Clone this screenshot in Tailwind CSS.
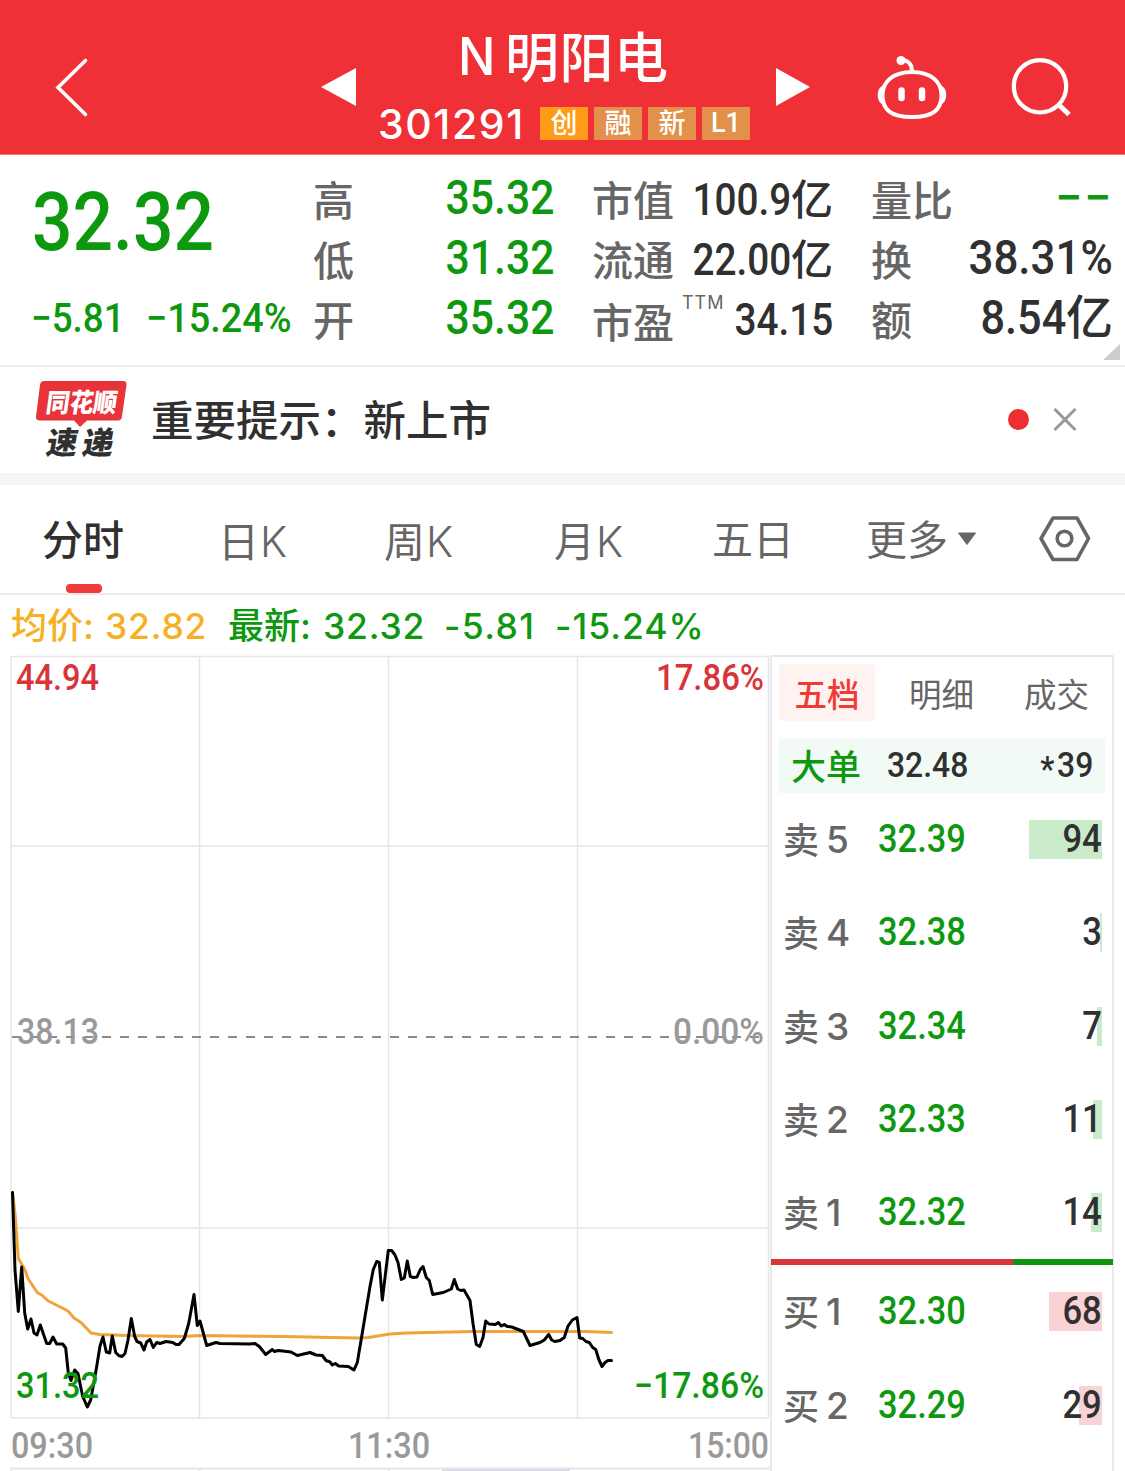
<!DOCTYPE html>
<html lang="zh-CN">
<head>
    <meta charset="UTF-8">
    <meta name="viewport" content="width=device-width, initial-scale=1.0">
    <title>N明阳电 301291</title>
    <!-- Tailwind CSS -->
    <script src="https://cdn.jsdelivr.net/npm/@tailwindcss/browser@4"></script>
</head>
<body class="bg-white w-[1125px] h-[1471px] overflow-hidden font-['Roboto','Noto_Sans_CJK_SC',sans-serif] font-medium text-[#303030] whitespace-nowrap">
    <!-- Header -->
    <header class="h-[155px] bg-[#f03037] text-white flex border-b border-[#f4777b]">
        <svg class="w-[320px] h-[154px] shrink-0" viewBox="0 0 320 154" fill="none" stroke="currentColor" stroke-width="3.6" stroke-linecap="round">
            <path d="M85.5 60.5L58 87.5L85.5 114.5"/>
        </svg>
        <svg class="w-[40px] h-[154px] shrink-0" viewBox="320 0 40 154" fill="currentColor">
            <path d="M321 87L356 68V106Z"/>
        </svg>
        <div class="w-[410px] flex flex-col shrink-0">
            <h1 class="h-[80px] pl-[96px] flex leading-[80px] text-[54px]">
                <span class="w-[49px] pl-[2px] pt-[17px] font-['Inter'] font-[550] text-[52px] origin-left scale-x-[0.95]">N</span>
                <span class="pt-[20px] tracking-[0.5px]">明阳电</span>
            </h1>
            <div class="flex items-center h-[33px] mt-[27px] ml-[18px]">
                <span class="w-[162px] font-['Inter'] font-[550] text-[41px] leading-[32px] tracking-[1.6px]">301291</span>
                <div class="flex gap-[6px] text-[27px] leading-[35px] text-center">
                    <span class="w-[48px] h-[33px] bg-[#ff9b17]">创</span>
                    <span class="w-[48px] h-[33px] bg-[#e2904a]">融</span>
                    <span class="w-[48px] h-[33px] bg-[#e2904a]">新</span>
                    <span class="w-[48px] h-[33px] bg-[#e2904a] leading-[32px]">L1</span>
                </div>
            </div>
        </div>
        <svg class="w-[40px] h-[154px] shrink-0" viewBox="770 0 40 154" fill="currentColor">
            <path d="M776 68L810 87L776 106Z"/>
        </svg>
        <!-- Assistant -->
        <svg class="w-[160px] h-[154px] shrink-0" viewBox="810 0 160 154" fill="none" stroke="currentColor" stroke-width="4">
            <path d="M912 72C930 72 941.500 81 941.500 95C941.500 110 933 117 912 117C891 117 882.500 110 882.500 95C882.500 81 894 72 912 72Z"/>
            <path d="M901 60C908 60 912 64 912 71"/>
            <circle cx="901" cy="60.5" r="4.5" fill="currentColor" stroke="none"/>
            <path d="M901.5 90.5V98M922 90.5V98" stroke-width="6.5" stroke-linecap="round"/>
            <path d="M883 86C876 87 876 103 883 104ZM941 86C948 87 948 103 941 104Z" fill="currentColor" stroke="none"/>
        </svg>
        <svg class="w-[155px] h-[154px] shrink-0" viewBox="970 0 155 154" fill="none" stroke="currentColor" stroke-width="4.2">
            <circle cx="1040" cy="86.3" r="26.2"/>
            <path d="M1059 105L1069 114.5" stroke-width="5"/>
        </svg>
    </header>

    <!-- Quote -->
    <section class="h-[212px] pt-[12px] border-b-2 border-[#ececec] flex relative">
        <div class="w-[313px] pl-[33px] text-[#0d980f] shrink-0">
            <div class="h-[110px] leading-[110px] text-[82px] origin-left scale-x-[0.87] -ml-[1px]">32.32</div>
            <div class="flex h-[82px] leading-[84px] text-[40px] -ml-[2px]">
                <span class="w-[115px] origin-left scale-x-[0.92]">−5.81</span>
                <span class="origin-left scale-x-[0.945]">−15.24%</span>
            </div>
        </div>
        <div class="w-[241px] shrink-0 leading-[60px]">
            <div class="h-[60px] flex justify-between"><span class="pt-[5px] text-[41px] text-[#666]">高</span><span class="pt-[1px] text-[48px] text-[#0d980f] origin-right scale-x-[0.89]">35.32</span></div>
            <div class="h-[60px] flex justify-between"><span class="pt-[5px] text-[41px] text-[#666]">低</span><span class="pt-[1px] text-[48px] text-[#0d980f] origin-right scale-x-[0.89]">31.32</span></div>
            <div class="h-[60px] flex justify-between"><span class="pt-[5px] text-[41px] text-[#666]">开</span><span class="pt-[1px] text-[48px] text-[#0d980f] origin-right scale-x-[0.89]">35.32</span></div>
        </div>
        <div class="w-[241px] ml-[38px] shrink-0 leading-[60px]">
            <div class="h-[60px] flex justify-between"><span class="pt-[5px] text-[41px] text-[#666]">市值</span><span class="flex text-[44px] pt-[3px]"><span class="origin-right scale-x-[0.88]">100.9</span><span class="text-[42px] pt-[1px]">亿</span></span></div>
            <div class="h-[60px] flex justify-between"><span class="pt-[5px] text-[41px] text-[#666]">流通</span><span class="flex text-[44px] pt-[3px]"><span class="origin-right scale-x-[0.88]">22.00</span><span class="text-[42px] pt-[1px]">亿</span></span></div>
            <div class="h-[60px] flex">
                <span class="pt-[7px] text-[41px] text-[#666]">市盈</span>
                <span class="w-[30px] ml-[8px] font-['Inter'] font-normal text-[18px] leading-[31px] tracking-[1px] text-[#666]">TTM</span>
                <span class="ml-auto pt-[3px] text-[44px] origin-right scale-x-[0.88]">34.15</span>
            </div>
        </div>
        <div class="w-[242px] ml-[38px] shrink-0 leading-[60px]">
            <div class="h-[60px] flex justify-between"><span class="pt-[5px] text-[41px] text-[#666]">量比</span><span class="pt-[1px] text-[48px] text-[#0d980f] tracking-[2px]">−−</span></div>
            <div class="h-[60px] flex justify-between"><span class="pt-[5px] text-[41px] text-[#666]">换</span><span class="pt-[1px] text-[48px] origin-right scale-x-[0.915]">38.31%</span></div>
            <div class="h-[60px] flex justify-between"><span class="pt-[5px] text-[41px] text-[#666]">额</span><span class="flex pt-[1px] text-[48px]"><span class="origin-right scale-x-[0.9]">8.54</span><span class="text-[47px]">亿</span></span></div>
        </div>
        <svg class="absolute right-[5px] bottom-[5px] w-[17px] h-[16px]" viewBox="0 0 17 16"><path d="M17 0V16H0Z" fill="#ccc"/></svg>
    </section>

    <!-- News -->
    <section class="h-[106px] flex items-center pl-[34px] pr-[47px]">
        <svg class="w-[95px] h-[80px] shrink-0 overflow-visible" viewBox="34 379 95 80" font-family="Noto Sans CJK SC" font-weight="900">
            <path d="M44 380H123Q127 380 126.500 384L122 415.500Q121.500 419.500 118 419.500H87L80 426L74 419.500H40Q35.500 419.500 36 415.500L40 384Q40.500 380 44 380Z" fill="#e8333a"/>
            <text transform="translate(45 411) skewX(-8)" font-size="26" textLength="71" lengthAdjust="spacingAndGlyphs" fill="#fff">同花顺</text>
            <text transform="translate(45 452.500) skewX(-10)" font-size="31" textLength="67" fill="#303030">速递</text>
        </svg>
        <span class="ml-[22px] text-[42.5px] leading-[60px] pt-[4px]">重要提示：新上市</span>
        <svg class="ml-auto w-[72px] h-[24px]" viewBox="1006 407.5 72 24">
            <circle cx="1018.500" cy="419" r="10.500" fill="#ee2f32"/>
            <path d="M1054.500 408.500L1075.500 429.500M1075.500 408.500L1054.500 429.500" stroke="#999" stroke-width="3"/>
        </svg>
    </section>
    <div class="h-[12px] bg-[#f5f5f5]"></div>

    <!-- Period tabs -->
    <nav class="h-[110px] flex border-b-2 border-[#ebebed] text-[41px] leading-[113px] font-normal text-[#666] relative">
        <span class="w-[176px] pl-[42px] font-medium text-[#303030]">分时</span>
        <span class="w-[166px] pl-[42px]">日<span class="font-['Inter'] font-[350] text-[42px] ml-px">K</span></span>
        <span class="w-[170px] pl-[42px]">周<span class="font-['Inter'] font-[350] text-[42px] ml-px">K</span></span>
        <span class="w-[158px] pl-[42px]">月<span class="font-['Inter'] font-[350] text-[42px] ml-px">K</span></span>
        <span class="w-[154px] pl-[42px]">五日</span>
        <span class="w-[131px] pl-[42px]">更多</span>
        <svg class="w-[170px] h-[108px]" viewBox="955 485 170 108">
            <path d="M958.500 533H975.500L967 544.500Z" fill="#666" stroke="#666" stroke-linejoin="round"/>
            <path d="M1053 518H1077L1088.500 538.500L1077 559.500H1053L1041 538.500Z" fill="none" stroke="#666" stroke-width="3.600" stroke-linejoin="round"/>
            <circle cx="1064.500" cy="538.500" r="7.300" fill="none" stroke="#666" stroke-width="3.600"/>
        </svg>
        <div class="absolute left-[66px] bottom-0 w-[36px] h-[9px] rounded-[4px] bg-[#f23c3c]"></div>
    </nav>

    <!-- Average and latest price -->
    <div class="h-[60px] flex pl-[11px] font-['Inter','Noto_Sans_CJK_SC'] font-[550] text-[35.5px] leading-[63px] text-[#0d980f]">
        <span class="w-[94px] font-medium text-[36px] text-[#f7b024]">均价:</span>
        <span class="w-[123px] text-[#f7b024] tracking-[0.8px]">32.82</span>
        <span class="w-[95px] font-medium text-[36px]">最新:</span>
        <span class="w-[121px] tracking-[0.8px]">32.32</span>
        <span class="w-[111px] tracking-[1.4px]">-5.81</span>
        <span class="tracking-[1px]">-15.24%</span>
    </div>

    <main class="flex h-[816px]">
        <!-- Intraday chart -->
        <svg class="w-[770px] h-[816px] shrink-0 overflow-visible" viewBox="0 655 770 816" font-family="Roboto" font-size="36.500" font-weight="500">
            <g stroke="#e6e6e8" stroke-width="1.500" fill="none">
                <path d="M11 656.500H769M11 846H769M11 1228H769M11 1418H769"/>
                <path d="M11.200 656V1418M199.500 656V1418M388.500 656V1418M577.500 656V1418M768.500 656V1418"/>
                <path d="M11 1468.500H770M11.200 1468V1471M199.500 1468V1471M388.500 1468V1471" stroke-width="2"/>
            </g>
            <path d="M442 1470.300H570" stroke="#d9d8e8" stroke-width="2"/>
            <path d="M12 1037H768" stroke="#666" stroke-width="1.500" stroke-dasharray="9 9"/>
            <polyline fill="none" stroke="#eda53a" stroke-width="3" stroke-linejoin="round" stroke-linecap="round" points="12.5,1192.5 15.3,1216.5 18.3,1258.5 24.3,1268.5 28.3,1279 37.3,1292.5 42.3,1295.5 48.3,1301 62.3,1308 68,1311 74,1318 81,1322.5 91,1333 100,1334.5 126.7,1335.5 183.3,1336.5 200,1335.5 283.3,1336.5 356.7,1338 368.3,1337.5 390,1334 406.7,1333 473.3,1331.5 586.7,1331.5 611.5,1332.5"/>
            <polyline fill="none" stroke="#000" stroke-width="3" stroke-linejoin="round" stroke-linecap="round" points="12.5,1192.5 15,1270 18.3,1311.5 21.7,1267 24.7,1313 27.7,1329 31,1319 34,1333 37,1335 40.3,1325 46.7,1343.5 49.7,1343.5 53,1337 56.7,1344 62.7,1344 65.7,1348 68.3,1373 71,1380.5 74.7,1370 78,1373.5 82.7,1396.5 87.3,1407 90.7,1400 96.7,1366.5 100,1346 103,1337 106.3,1352 109.7,1353 112.3,1336 115.7,1352.5 118.7,1355.5 122,1356.5 125,1353.5 128,1340 131.3,1318.5 134.7,1336.5 137,1341.5 140.7,1343 144,1350 146.7,1342 150,1339.5 153.3,1347.5 156.7,1342.5 160,1343.5 166,1341.5 172.7,1342.5 176,1344.5 179,1344.5 184.3,1338.5 188.7,1323.5 194,1294.5 197.3,1325.5 200,1321 206.7,1345.5 216,1342.5 220,1343.5 250,1344 255,1343.5 259.3,1346.5 265.7,1354.5 272.3,1349.5 274.3,1351.5 278.3,1350.5 291,1352 297.3,1355.5 310,1352.5 316,1355 322.3,1355.5 326,1360.5 330,1362 332.3,1365 335.3,1363.5 338.7,1366 348.3,1366.5 354,1370 357.3,1362.5 361.7,1336.5 370,1286.5 373.3,1269.5 376.7,1261.5 379.3,1262.5 382.3,1300 388.3,1250.5 391.7,1250.5 395,1255 398,1262.5 401.3,1279.5 404.3,1278 407.3,1261 410.3,1276.5 413.3,1277.5 417,1277 420.3,1269.5 423,1266.5 426.3,1277.5 429.3,1280.5 432.7,1294.5 443.3,1292.5 451.3,1289 454.3,1279.5 457.7,1289 461,1290.5 464,1290 470,1300.5 473,1323.5 476.3,1344.5 479.7,1346.5 483,1337.5 485.7,1321 489,1324 495.3,1324.5 498.3,1322.5 501.3,1326 504.3,1324.5 507.3,1326.5 511.7,1327 523.3,1331.5 530,1345.5 540,1342.5 544.3,1340 548.7,1334.5 551.7,1340 554.7,1341.5 560,1340.5 564.3,1337.5 568,1326 572.3,1320 577,1317.5 579.7,1338 582.7,1338.5 586,1341.5 589.3,1342.5 592.7,1347.5 595.7,1349.5 599,1360 602,1366.5 605,1362.5 608,1360.5 611.5,1360.5"/>
            <g fill="#d9343a">
                <text x="16" y="690" textLength="83" lengthAdjust="spacingAndGlyphs">44.94</text>
                <text x="656" y="690" textLength="108" lengthAdjust="spacingAndGlyphs">17.86%</text>
            </g>
            <g fill="#999">
                <text x="17" y="1044" textLength="82" lengthAdjust="spacingAndGlyphs">38.13</text>
                <text x="673" y="1044" textLength="91" lengthAdjust="spacingAndGlyphs">0.00%</text>
                <text x="11" y="1457.500" textLength="82" lengthAdjust="spacingAndGlyphs">09:30</text>
                <text x="348" y="1457.500" textLength="82" lengthAdjust="spacingAndGlyphs">11:30</text>
                <text x="688" y="1457.500" textLength="81" lengthAdjust="spacingAndGlyphs">15:00</text>
            </g>
            <g fill="#0d980f">
                <text x="16" y="1398" textLength="83" lengthAdjust="spacingAndGlyphs">31.32</text>
                <text x="634" y="1398" textLength="130" lengthAdjust="spacingAndGlyphs">−17.86%</text>
            </g>
        </svg>

        <!-- Order book -->
        <div class="w-[344px] h-[816px] border-x-2 border-t-2 border-[#e9e9eb] shrink-0">
            <div class="flex pl-[7px] pt-[7px] text-[32.5px] leading-[64px] text-[#666] font-normal">
                <span class="w-[96px] h-[57px] text-center rounded bg-[#fff3f2] text-[#f23a35] font-medium">五档</span>
                <span class="ml-[34px] h-[57px]">明细</span>
                <span class="ml-[50px] h-[57px]">成交</span>
            </div>
            <div class="mt-[18px] ml-[7px] w-[326px] h-[54px] bg-[#f1faf5] flex leading-[54px] text-[35px]">
                <span class="w-[108px] pl-[12px] pt-[3px] text-[#0d980f]">大单</span>
                <span class="origin-left scale-x-[0.91]">32.48</span>
                <span class="ml-auto mr-[12px] flex origin-right scale-x-[0.91]"><span class="pt-[4px] mr-[3px]">*</span>39</span>
            </div>
            <div id="asks"></div>
            <div class="h-[6px] flex -mx-px">
                <div class="w-[242px] bg-[#d9363b]"></div>
                <div class="flex-1 bg-[#0f950f]"></div>
            </div>
            <div id="bids"></div>
        </div>
    </main>

    <script>
        // [label, level, price, volume, bar width]
        const asks = [
            ['卖', 5, '32.39', 94, 73],
            ['卖', 4, '32.38', 3, 2],
            ['卖', 3, '32.34', 7, 5],
            ['卖', 2, '32.33', 11, 9],
            ['卖', 1, '32.32', 14, 11]
        ];
        const bids = [
            ['买', 1, '32.30', 68, 53],
            ['买', 2, '32.29', 29, 23]
        ];

        function renderRows(id, rows, barColor) {
            document.getElementById(id).innerHTML = rows.map(([side, level, price, volume, bar]) => `
                <div class="h-[93.3px] flex leading-[91px] pl-[11px] pr-[10px] relative">
                    <span class="text-[36px] text-[#666] w-[43px] pt-[4px]">${side}</span>
                    <span class="text-[37px] text-[#666] w-[52px] font-['Inter'] font-[550] leading-[94px]">${level}</span>
                    <span class="text-[38.5px] text-[#0d980f] origin-left scale-x-[0.895]">${price}</span>
                    <span class="absolute right-[10px] top-[27px] h-[39px] ${barColor}" style="width: ${bar}px"></span>
                    <span class="ml-auto text-[38.5px] relative origin-right scale-x-[0.9]">${volume}</span>
                </div>
            `).join('');
        }

        renderRows('asks', asks, 'bg-[#c9ebc9]');
        renderRows('bids', bids, 'bg-[#f9d2d5]');
    </script>
</body>
</html>
